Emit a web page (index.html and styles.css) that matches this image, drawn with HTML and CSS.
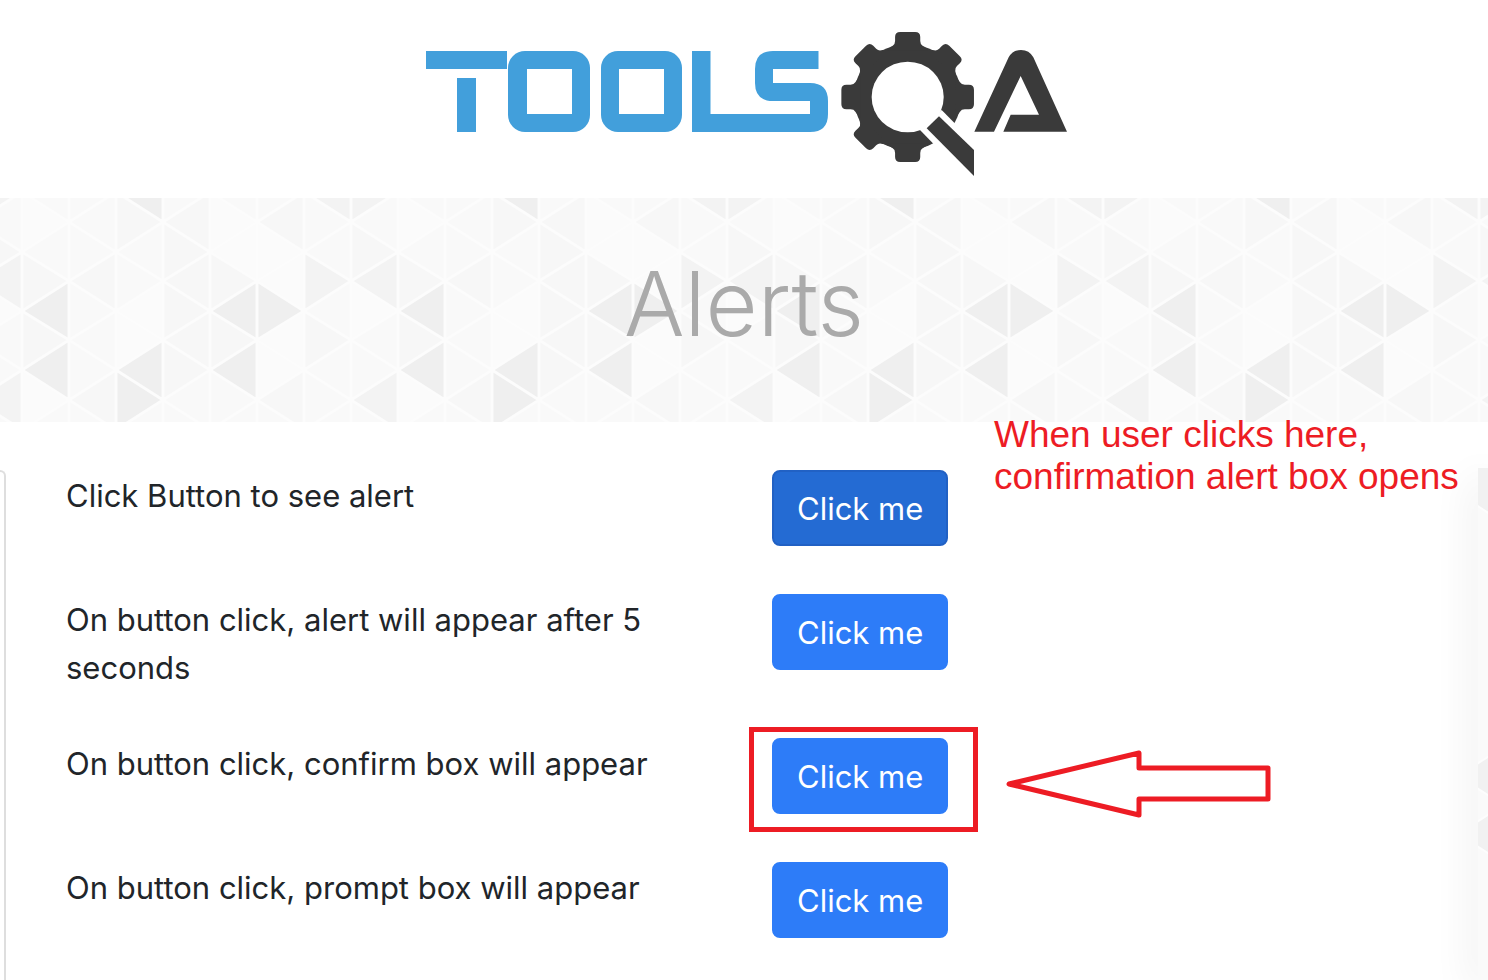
FILE: index.html
```html
<!DOCTYPE html>
<html lang="en">
<head>
  <meta charset="UTF-8">
  <meta name="viewport" content="width=device-width, initial-scale=1">
  <title>Alerts - ToolsQA</title>
  <link rel="stylesheet" href="styles.css">
</head>
<body>

  <header class="site-header">
    <svg class="logo" viewBox="414 20 660 160" role="img" aria-label="ToolsQA">
      <g fill="#429fdb">
        <rect x="426" y="51" width="81" height="18"/>
        <rect x="457" y="78" width="19" height="54"/>
        <rect x="508" y="51" width="82" height="81" rx="17"/>
        <rect x="601" y="51" width="81" height="81" rx="17"/>
        <path d="M692 51H710.500V114H810V101H773Q755 101 755 83V69Q755 51 773 51H818.500V69H773V83H810Q828 83 828 101V114Q828 132 810 132H692z"/>
      </g>
      <g fill="#fff">
        <rect x="527" y="69" width="45" height="45"/>
        <rect x="619" y="69" width="45" height="45"/>
      </g>
      <!-- gear and magnifier handle -->
      <g transform="translate(740 20) scale(.33333)" fill="#3a3a3a">
        <g transform="translate(503 231) scale(1.02 1)">
          <circle r="158"/>
          <path id="tooth" d="M-64 -140L-44 -154Q-37 -158 -37 -168V-180Q-37 -195 -22 -195H22Q37 -195 37 -180V-168Q37 -158 44 -154L64 -140z"/>
          <use href="#tooth" transform="rotate(45)"/>
          <use href="#tooth" transform="rotate(90)"/>
          <use href="#tooth" transform="rotate(180)"/>
          <use href="#tooth" transform="rotate(225)"/>
          <use href="#tooth" transform="rotate(270)"/>
          <use href="#tooth" transform="rotate(315)"/>
          <circle r="106" fill="#fff"/>
        </g>
        <path fill="#fff" d="M605 270L715 382V510L540 330z"/>
        <path d="M597 289L702 390V468L560 325z"/>
        <path d="M703 335L806 112Q818 90 843 90Q868 90 880 112L981 335H790L812 284H897L842 168L762 335z"/>
      </g>
    </svg>
  </header>

  <div class="banner">
    <svg class="banner-bg" aria-hidden="true">
      <defs>
        <pattern id="triangles" x="22" y="0" width="376" height="224" patternUnits="userSpaceOnUse">
          <rect width="376" height="224" fill="#f9f9f9"/>
          <path fill="#fbfbfb" d="M0 -6v60l47-30z M0 172v60l47-30z M94 113l47-30v60z M94 113v60l47-30z M188 54l47-30v60z M188 -6v60l47-30z M235 24v60l47-30z M235 83l47-30v60z M235 142l47-30v60z M235 142v60l47-30z M329 83v60l47-30z"/>
          <path fill="#f7f7f7" d="M0 53v60l47-30z M0 113v60l47-30z M47 83l47-30v60z M47 202l47-30v60z M94 -6v60l47-30z M141 24l47-30v60z M141 24v60l47-30z M141 83l47-30v60z M141 83v60l47-30z M141 142l47-30v60z M141 142v60l47-30z M188 53v60l47-30z M188 113v60l47-30z M235 24l47-30v60z M282 113v60l47-30z M329 24v60l47-30z M235 202l47-30v60z"/>
          <path fill="#f3f3f3" d="M282 -6l47-30v60z M282 53v60l47-30z M329 -36v60l47-30z M329 83l47-30v60z M329 202l47-30v60z"/>
          <path fill="#efefef" d="M0 113l47-30v60z M0 172l47-30v60z M94 -6l47-30v60z M94 172l47-30v60z M94 172v60l47-30z M188 113l47-30v60z M188 172l47-30v60z M235 83v60l47-30z"/>
          <!-- white grid between the triangles -->
          <path fill="none" stroke="#fcfcfc" stroke-width="3" d="M0 0v224M47 0v224M94 0v224M141 0v224M188 0v224M235 0v224M282 0v224M329 0v224M376 0v224
            M0 -6l47 30l47-30l47 30l47-30l47 30l47-30l47 30l47-30
            M0 54l47-30l47 30l47-30l47 30l47-30l47 30l47-30l47 30
            M0 54l47 29l47-29l47 29l47-29l47 29l47-29l47 29l47-29
            M0 113l47-30l47 30l47-30l47 30l47-30l47 30l47-30l47 30
            M0 113l47 29l47-29l47 29l47-29l47 29l47-29l47 29l47-29
            M0 172l47-30l47 30l47-30l47 30l47-30l47 30l47-30l47 30
            M0 172l47 30l47-30l47 30l47-30l47 30l47-30l47 30l47-30
            M0 232l47-30l47 30l47-30l47 30l47-30l47 30l47-30l47 30"/>
        </pattern>
      </defs>
      <rect width="100%" height="100%" fill="url(#triangles)"/>
    </svg>
    <h1>Alerts</h1>
  </div>

  <main class="page">
    <div class="left-panel"></div>

    <div class="content">
      <div class="row">
        <label for="alertButton">Click Button to see alert</label>
        <div class="action"><button id="alertButton" class="btn active" type="button">Click me</button></div>
      </div>
      <div class="row">
        <label for="timerAlertButton">On button click, alert will appear after 5 seconds</label>
        <div class="action"><button id="timerAlertButton" class="btn" type="button">Click me</button></div>
      </div>
      <div class="row">
        <label for="confirmButton">On button click, confirm box will appear</label>
        <div class="action marked">
          <button id="confirmButton" class="btn" type="button">Click me</button>
          <svg class="arrow" viewBox="0 0 268 68" aria-hidden="true">
            <path d="M4 34L134 3V18H263V49H134V65z" fill="none" stroke="#ed1c24" stroke-width="5" stroke-linejoin="round"/>
          </svg>
        </div>
      </div>
      <div class="row">
        <label for="promptButton">On button click, prompt box will appear</label>
        <div class="action"><button id="promptButton" class="btn" type="button">Click me</button></div>
      </div>
    </div>

    <p class="note">When user clicks here,<br>confirmation alert box opens</p>

    <aside class="right-panel">
      <svg width="10" height="512" aria-hidden="true">
        <g fill="#f1f1f1" stroke="#fdfdfd" stroke-width="2">
          <path d="M-2 -2H12V46L-2 37z"/>
          <path d="M-20 308l47-30v60z"/>
          <path d="M-20 366l47-30v60z"/>
        </g>
      </svg>
    </aside>
  </main>

</body>
</html>
```
FILE: styles.css
```css
html, body {
  margin: 0;
  padding: 0;
}

body {
  display: flex;
  flex-direction: column;
  min-height: 100vh;
  overflow: hidden;
  background-color: #fff;
  color: #212529;
  font-family: Inter, Roboto, "Liberation Sans", sans-serif;
  font-size: 31px;
  line-height: 48px;
}

.site-header {
  display: flex;
  justify-content: center;
  padding: 20px 0 18px;
}

.logo {
  width: 660px;
  max-width: 100%;
  height: 160px;
}

/* title banner */
.banner {
  position: relative;
  padding: 48px 0 60px;
  text-align: center;
}

.banner-bg {
  position: absolute;
  top: 0;
  left: 0;
  width: 100%;
  height: 100%;
}

.banner h1 {
  position: relative;
  margin: 0;
  color: #aaa;
  font-size: 90px;
  font-weight: 350;
  line-height: 116px;
}

.page {
  position: relative;
  flex: 1;
  display: flex;
}

.left-panel {
  width: 4px;
  margin-top: 48px;
  border: solid #dedede;
  border-width: 2px 2px 0 0;
  border-top-right-radius: 8px;
}

.content {
  flex: 1;
  padding: 48px 0 0 60px;
}

.row {
  display: grid;
  grid-template-columns: 1fr 1fr;
  align-items: start;
  margin-bottom: 48px;
}

.row:last-child {
  margin-bottom: 40px;
}

.row label {
  margin-bottom: -2px;
  padding: 2px 30px 0 0;
}

.action {
  position: relative;
  display: flex;
}

.btn {
  padding: 13px 23px 11px;
  border: 2px solid #2d7cf8;
  border-radius: 8px;
  background-color: #2d7cf8;
  color: #fff;
  font: inherit;
  cursor: pointer;
}

.btn.active {
  border-color: #2161c4;
  background-color: #246bd3;
}

/* red marks over the page */
.marked::before {
  content: "";
  position: absolute;
  top: -11px;
  left: -23px;
  width: 219px;
  height: 95px;
  border: 5px solid #ed1c24;
}

.arrow {
  position: absolute;
  top: 12px;
  left: 233px;
  width: 268px;
  height: 68px;
}

.note {
  position: absolute;
  top: -8px;
  left: 994px;
  margin: 0;
  color: #ed1c24;
  font-family: "Liberation Sans", Arial, sans-serif;
  font-size: 37px;
  line-height: 42px;
  white-space: nowrap;
}

.right-panel {
  width: 10px;
  margin-top: 46px;
  background-color: #fafafa;
  box-shadow: 0 10px 40px rgba(0, 0, 0, 0.16);
}

.right-panel svg {
  display: block;
}
```
